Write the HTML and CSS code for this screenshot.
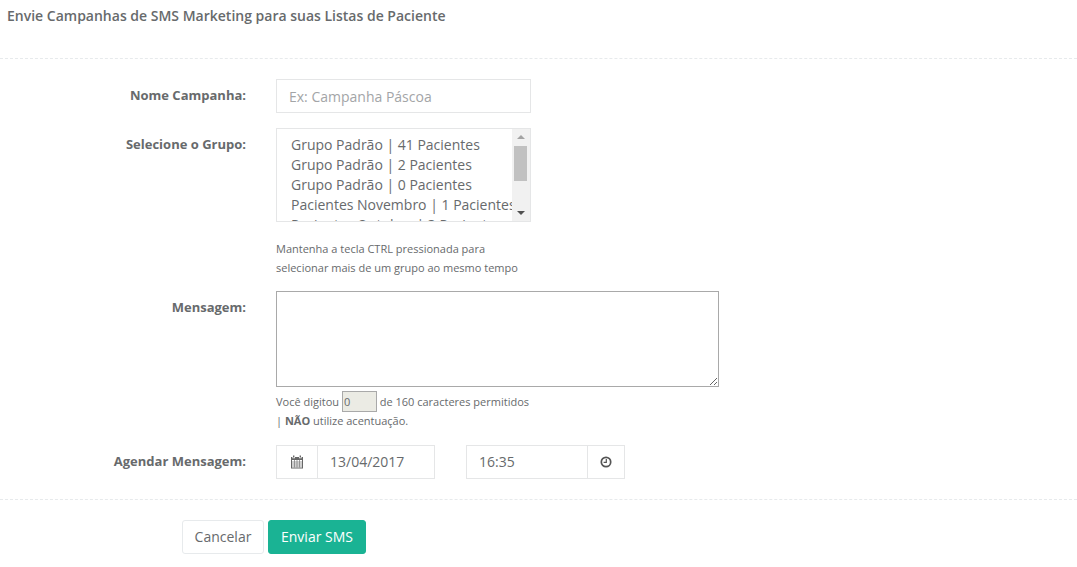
FILE: index.html
```html
<!DOCTYPE html>
<html lang="pt-BR">
<head>
  <meta charset="UTF-8" />
  <title>Campanhas de SMS</title>
  <link rel="stylesheet" href="styles.css">
</head>
<body>
  <div class="panel-title">Envie Campanhas de SMS Marketing para suas Listas de Paciente</div>

  <form class="sms-form">
    <div class="form-row row-name">
      <label class="form-label">Nome Campanha:</label>
      <input class="form-input name-input" type="text" placeholder="Ex: Campanha Páscoa" />
    </div>

    <div class="form-row row-group">
      <label class="form-label">Selecione o Grupo:</label>
      <div class="field">
        <div class="group-list">
          <div class="group-options">
            <div>Grupo Padrão | 41 Pacientes</div>
            <div>Grupo Padrão | 2 Pacientes</div>
            <div>Grupo Padrão | 0 Pacientes</div>
            <div>Pacientes Novembro | 1 Pacientes</div>
            <div>Pacientes Outubro | 3 Pacientes</div>
          </div>
          <div class="fake-scroll">
            <span class="arrow-up"></span>
            <span class="thumb"></span>
            <span class="arrow-down"></span>
          </div>
        </div>
        <p class="help-text group-help">Mantenha a tecla CTRL pressionada para<br>selecionar mais de um grupo ao mesmo tempo</p>
      </div>
    </div>

    <div class="form-row row-message">
      <label class="form-label">Mensagem:</label>
      <div class="field">
        <textarea class="message-box"></textarea>
        <p class="help-text counter-text">Você digitou <input class="counter" type="text" value="0" readonly /> de 160 caracteres permitidos<br>| <b>NÃO</b> utilize acentuação.</p>
      </div>
    </div>

    <div class="form-row row-schedule">
      <label class="form-label">Agendar Mensagem:</label>
      <div class="input-group date-group">
        <span class="addon addon-left">
          <svg width="14" height="14" viewBox="0 0 14 14">
            <path fill="#666" d="M3 0.5h1.4v2H3zM9.6 0.5H11v2H9.6zM1 2h1.4v1.2h2.6V2h4v1.2h2.6V2H13v11.5H1zM2 5v7.5h10V5z"/>
            <path stroke="#777" stroke-width="0.7" fill="none" d="M2 7h10M2 9h10M2 11h10M4.5 5v7.5M7 5v7.5M9.5 5v7.5"/>
          </svg>
        </span>
        <input class="form-input group-input" type="text" value="13/04/2017" />
      </div>
      <div class="input-group time-group">
        <input class="form-input group-input" type="text" value="16:35" />
        <span class="addon addon-right">
          <svg width="12" height="12" viewBox="0 0 12 12">
            <circle cx="6" cy="6" r="4.7" fill="none" stroke="#555" stroke-width="1.7"/>
            <path d="M6.3 3v3.4H3.6" fill="none" stroke="#555" stroke-width="1.2"/>
          </svg>
        </span>
      </div>
    </div>

    <div class="form-actions">
      <button class="btn btn-default" type="button">Cancelar</button>
      <button class="btn btn-primary" type="button">Enviar SMS</button>
    </div>
  </form>
</body>
</html>
```

FILE: styles.css
```css
* {
  box-sizing: border-box;
}

body {
  margin: 0;
  background: #fff;
  font-family: "Open Sans", sans-serif;
  font-size: 13px;
  color: #676a6c;
  overflow: hidden;
}

.panel-title {
  height: 59px;
  padding: 7px 7px 0;
  font-size: 14px;
  font-weight: 600;
  line-height: 18px;
  border-bottom: 1px dashed #e7eaec;
}

.sms-form {
  padding-top: 20px;
}

.form-row {
  display: flex;
  align-items: flex-start;
}

.form-label {
  width: 246px;
  margin-right: 30px;
  padding-top: 7px;
  flex-shrink: 0;
  font-weight: 700;
  line-height: 18px;
  text-align: right;
}

.form-input {
  height: 34px;
  padding: 6px 12px;
  border: 1px solid #e5e6e7;
  background: #fff;
  font-family: inherit;
  font-size: 14px;
  color: #676a6c;
  outline: none;
}

.form-input::placeholder {
  color: #a3a5a7;
}

.name-input {
  width: 255px;
}

.row-group {
  margin-top: 15px;
}

.group-list {
  position: relative;
  width: 255px;
  height: 94px;
  border: 1px solid #e5e6e7;
  overflow: hidden;
}

.group-options {
  padding: 6px 0 0 14px;
  width: 253px;
  font-size: 14px;
  line-height: 20px;
  white-space: nowrap;
  overflow: hidden;
}

.fake-scroll {
  position: absolute;
  top: 0;
  right: 0;
  bottom: 0;
  width: 18px;
  background: #f1f1f1;
}

.thumb {
  position: absolute;
  top: 17px;
  left: 2px;
  width: 13px;
  height: 35px;
  background: #c1c1c1;
}

.arrow-up,
.arrow-down {
  position: absolute;
  left: 5px;
  width: 0;
  height: 0;
  border-left: 4px solid transparent;
  border-right: 4px solid transparent;
}

.arrow-up {
  top: 6px;
  border-bottom: 4px solid #a3a3a3;
}

.arrow-down {
  bottom: 6px;
  border-top: 4px solid #505050;
}

.help-text {
  margin: 0;
  font-size: 11px;
  line-height: 19px;
}

.group-help {
  margin-top: 17px;
}

.row-message {
  margin-top: 14px;
}

.message-box {
  display: block;
  width: 443px;
  height: 96px;
  border: 1px solid #a9a9a9;
  background: #fff;
  outline: none;
}

.counter-text {
  margin-top: 6px;
  line-height: 18px;
}

.counter {
  width: 35px;
  height: 21px;
  padding: 0 1px;
  margin: -4px 0 0;
  border: 1px solid #a9a9a9;
  background: #ebebe4;
  font-family: inherit;
  font-size: 11px;
  color: #676a6c;
  vertical-align: middle;
  outline: none;
}

.row-schedule {
  margin-top: 15px;
}

.input-group {
  display: flex;
}

.addon {
  display: flex;
  align-items: center;
  justify-content: center;
  height: 34px;
  border: 1px solid #e5e6e7;
}

.addon-left {
  width: 41px;
  border-right: none;
}

.addon-right {
  width: 37px;
  border-left: none;
}

.date-group .group-input {
  width: 118px;
}

.time-group {
  margin-left: 31px;
}

.time-group .group-input {
  width: 122px;
}

.form-actions {
  display: flex;
  gap: 4px;
  margin-top: 20px;
  padding: 20px 0 0 182px;
  border-top: 1px dashed #e7eaec;
}

.btn {
  height: 34px;
  padding: 0;
  border: 1px solid #e7eaec;
  border-radius: 3px;
  font-family: inherit;
  font-size: 14px;
}

.btn-default {
  width: 82px;
  background: #fff;
  color: #676a6c;
}

.btn-primary {
  width: 98px;
  border-color: #1ab394;
  background: #1ab394;
  color: #fff;
}
```
